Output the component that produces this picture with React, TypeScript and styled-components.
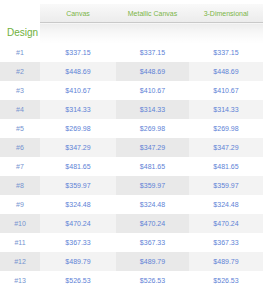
import React from "react";
import styled, { createGlobalStyle } from "styled-components";

const Global = createGlobalStyle`
  html, body { margin: 0; padding: 0; background: #fff; }
  body { font-family: "Liberation Sans", Arial, sans-serif; }
`;

const Wrap = styled.div`
  padding-top: 4px;
  width: 263px;
`;

const Table = styled.table`
  border-collapse: collapse;
  table-layout: fixed;
  width: 263px;
`;

const Col = styled.col<{ $w: number }>`
  width: ${(p) => p.$w}px;
`;

const HeadCell = styled.th`
  height: 18px;
  padding: 0;
  font-size: 7px;
  font-weight: normal;
  color: #7bb547;
  text-align: center;
  vertical-align: middle;
  background: linear-gradient(to bottom, #f9f9f9 0%, #ececec 100%);
  border-bottom: 1px solid #c9c9c9;
`;

const BlankHead = styled.th`
  padding: 0;
  background: #fff;
`;

const DesignCell = styled.td`
  height: 20px;
  padding: 0 0 0 7px;
  font-size: 10px;
  line-height: 10px;
  color: #6fb03c;
  text-align: left;
  vertical-align: middle;
  white-space: nowrap;
`;

const ShadowCell = styled.td`
  height: 20px;
  padding: 0;
  background: linear-gradient(to bottom, #ececec 0%, #f7f7f7 45%, #ffffff 100%);
`;

const Cell = styled.td<{ $shade: "none" | "dark" | "light"; $id?: boolean }>`
  height: 19px;
  padding: 0;
  font-size: 7px;
  text-align: center;
  vertical-align: middle;
  color: ${(p) => (p.$id ? "#7593d0" : "#5e82d6")};
  background: ${(p) =>
    p.$shade === "dark" ? "#e9e9e9" : p.$shade === "light" ? "#f3f3f3" : "#ffffff"};
`;

const rows: [string, string][] = [
  ["#1", "$337.15"],
  ["#2", "$448.69"],
  ["#3", "$410.67"],
  ["#4", "$314.33"],
  ["#5", "$269.98"],
  ["#6", "$347.29"],
  ["#7", "$481.65"],
  ["#8", "$359.97"],
  ["#9", "$324.48"],
  ["#10", "$470.24"],
  ["#11", "$367.33"],
  ["#12", "$489.79"],
  ["#13", "$526.53"],
];

export default function App() {
  return (
    <>
      <Global />
      <Wrap>
        <Table>
          <colgroup>
            <Col $w={40} />
            <Col $w={76} />
            <Col $w={73} />
            <Col $w={74} />
          </colgroup>
          <thead>
            <tr>
              <BlankHead />
              <HeadCell>Canvas</HeadCell>
              <HeadCell>Metallic Canvas</HeadCell>
              <HeadCell>3-Dimensional</HeadCell>
            </tr>
          </thead>
          <tbody>
            <tr>
              <DesignCell>Design</DesignCell>
              <ShadowCell />
              <ShadowCell />
              <ShadowCell />
            </tr>
            {rows.map(([id, price], i) => {
              const shaded = i % 2 === 1;
              return (
                <tr key={id}>
                  <Cell $id $shade={shaded ? "dark" : "none"}>{id}</Cell>
                  <Cell $shade={shaded ? "light" : "none"}>{price}</Cell>
                  <Cell $shade={shaded ? "dark" : "none"}>{price}</Cell>
                  <Cell $shade={shaded ? "light" : "none"}>{price}</Cell>
                </tr>
              );
            })}
          </tbody>
        </Table>
      </Wrap>
    </>
  );
}
